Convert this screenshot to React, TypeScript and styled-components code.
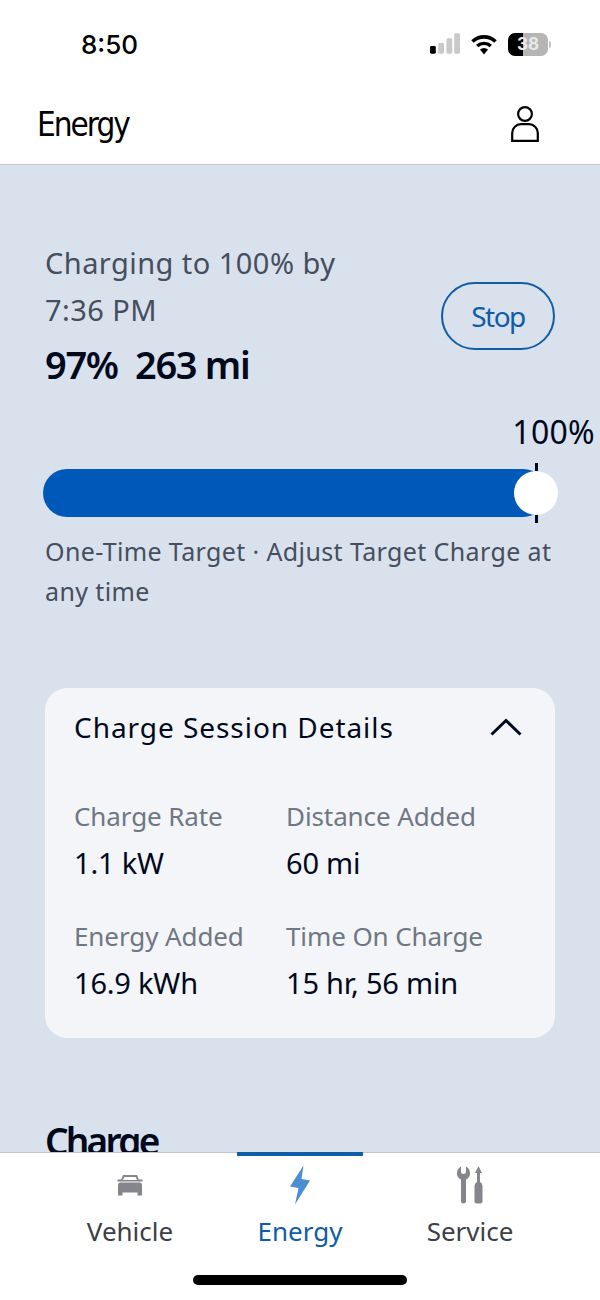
import { createGlobalStyle, styled } from "styled-components";

const GlobalStyle = createGlobalStyle`
  html, body {
    margin: 0;
    padding: 0;
    background: #ffffff;
  }
  body {
    font-family: "Noto Sans", "Open Sans", sans-serif;
  }
`;

const Page = styled.div`
  width: 600px;
  height: 1300px;
  display: flex;
  flex-direction: column;
  overflow: hidden;
  background: #ffffff;
`;

const StatusBar = styled.div`
  height: 88px;
  flex-shrink: 0;
  display: flex;
  justify-content: space-between;
  align-items: flex-start;
  padding: 25px 52px 0 81px;
  box-sizing: border-box;
`;

const Clock = styled.span`
  font-family: "Inter", sans-serif;
  font-size: 26px;
  line-height: 40px;
  font-weight: 500;
  color: #000000;
`;

const StatusIcons = styled.div`
  display: flex;
  align-items: center;
  gap: 11px;
  height: 40px;
  margin-top: -1px;
`;

const Battery = styled.div`
  position: relative;
  width: 40px;
  height: 23px;
  border-radius: 7px;
  background: linear-gradient(to right, #000000 38%, #b5b5b5 38%);
  color: #e9e9e9;
  font-family: "Inter", sans-serif;
  font-size: 17px;
  font-weight: 700;
  line-height: 23px;
  text-align: center;

  &::after {
    content: "";
    position: absolute;
    right: -3px;
    top: 8px;
    width: 2px;
    height: 7px;
    border-radius: 0 2px 2px 0;
    background: #c4c4c4;
  }
`;

const TopBar = styled.header`
  height: 77px;
  flex-shrink: 0;
  display: flex;
  justify-content: space-between;
  align-items: center;
  padding: 0 61px 4px 37px;
  box-sizing: border-box;
  border-bottom: 1px solid #c4c7cb;
`;

const TopTitle = styled.h1`
  margin: 0;
  font-family: "DejaVu Sans Condensed", "Noto Sans", sans-serif;
  font-size: 33px;
  font-weight: 400;
  letter-spacing: -2px;
  color: #000000;
`;

const Main = styled.main`
  flex: 1;
  min-height: 0;
  overflow: hidden;
  background: #d9e1ec;
  padding: 74px 45px 0;
  box-sizing: border-box;
`;

const StatusRow = styled.section`
  display: flex;
  justify-content: space-between;
  align-items: center;
`;

const StatusText = styled.div`
  display: flex;
  flex-direction: column;
`;

const ChargeLine = styled.div`
  font-size: 29px;
  line-height: 47px;
  color: #454e5e;
  letter-spacing: 0.45px;
`;

const RangeLine = styled.div`
  margin-top: 6px;
  font-size: 38px;
  line-height: 50px;
  font-weight: 600;
  color: #00091c;
  letter-spacing: -1.3px;
  white-space: pre;
`;

const StopButton = styled.button`
  width: 114px;
  height: 68px;
  margin-top: 3px;
  border: 2px solid #0f5da6;
  border-radius: 34px;
  background: transparent;
  color: #0f5da6;
  font-family: "Noto Sans", sans-serif;
  font-size: 28px;
  letter-spacing: -1.5px;
  padding: 0;
`;

const TargetLabel = styled.div`
  margin: 21px -40px 0 0;
  text-align: right;
  font-size: 32px;
  line-height: 44px;
  color: #00091c;
  letter-spacing: 0.3px;
`;

const Track = styled.div`
  position: relative;
  margin: 15px 0 0 -2px;
  width: 504px;
  height: 48px;
  border-radius: 24px;
  background: #0059b8;
`;

const Tick = styled.span`
  position: absolute;
  right: 9px;
  top: -6px;
  width: 3px;
  height: 60px;
  background: #000a1e;
`;

const Thumb = styled.span`
  position: absolute;
  right: -11px;
  top: 2px;
  width: 44px;
  height: 44px;
  border-radius: 50%;
  background: #ffffff;
`;

const Hint = styled.p`
  margin: 14px 0 0;
  font-size: 25px;
  line-height: 40px;
  color: #454e5e;
  letter-spacing: 0.38px;
`;

const Card = styled.section`
  margin-top: 77px;
  height: 350px;
  box-sizing: border-box;
  padding: 18px 33px 0 30px;
  background: #f3f5f9;
  border-radius: 22px;
`;

const CardHeader = styled.div`
  display: flex;
  justify-content: space-between;
  align-items: center;
  font-size: 28px;
  line-height: 42px;
  color: #00091c;
  letter-spacing: 0.95px;
  margin-left: -1px;
`;

const DetailGrid = styled.dl`
  margin: 46px 0 0 -1px;
  display: grid;
  grid-template-columns: 212px 1fr;
  row-gap: 26px;
`;

const Detail = styled.div`
  display: flex;
  flex-direction: column;
`;

const DetailLabel = styled.dt`
  font-size: 26px;
  line-height: 44px;
  color: #6f7783;
  letter-spacing: -0.1px;
`;

const DetailValue = styled.dd`
  margin: 0;
  font-size: 29px;
  line-height: 50px;
  color: #00091c;
  letter-spacing: -0.2px;
`;

const SectionTitle = styled.h2`
  margin: 78px 0 0;
  font-size: 37px;
  line-height: 50px;
  font-weight: 600;
  color: #00091c;
  letter-spacing: -2.8px;
`;

const TabBar = styled.nav`
  position: relative;
  height: 148px;
  flex-shrink: 0;
  display: grid;
  grid-template-columns: 260px 80px 260px;
  border-top: 1px solid #c4c7cb;
  box-sizing: border-box;
  background: #ffffff;
`;

const Tab = styled.div<{ $active?: boolean }>`
  display: flex;
  flex-direction: column;
  align-items: center;
  color: ${(p) => (p.$active ? "#0f5da6" : "#3c3f46")};
  font-size: 26px;
  line-height: 40px;
`;

const TabIcon = styled.div`
  height: 53px;
  margin-top: 5px;
  display: flex;
  align-items: center;
  justify-content: center;
`;

const ActiveMark = styled.span`
  position: absolute;
  left: 237px;
  top: -1px;
  width: 126px;
  height: 4px;
  background: #0f5da6;
`;

const HomeBar = styled.span`
  position: absolute;
  left: 193px;
  bottom: 15px;
  width: 214px;
  height: 10px;
  border-radius: 5px;
  background: #000000;
`;

const details = [
  { label: "Charge Rate", value: "1.1 kW" },
  { label: "Distance Added", value: "60 mi" },
  { label: "Energy Added", value: "16.9 kWh" },
  { label: "Time On Charge", value: "15 hr, 56 min" },
];

export default function App() {
  return (
    <Page>
      <GlobalStyle />
      <StatusBar>
        <Clock>8:50</Clock>
        <StatusIcons>
          <svg width="30" height="22" viewBox="0 0 31 22">
            <rect x="0" y="13" width="6" height="8" rx="1.5" fill="#000" />
            <rect x="8.5" y="10" width="6" height="11" rx="1.5" fill="#c9c9c9" />
            <rect x="17" y="5" width="6" height="16" rx="1.5" fill="#c9c9c9" />
            <rect x="25" y="0" width="6" height="21" rx="1.5" fill="#c9c9c9" />
          </svg>
          <svg width="26" height="21" viewBox="0 0 26 21">
            <path d="M1.5 7.5 A16.5 16.5 0 0 1 24.5 7.5" fill="none" stroke="#000" strokeWidth="3.6" />
            <path d="M6.2 12 A10 10 0 0 1 19.8 12" fill="none" stroke="#000" strokeWidth="3.4" />
            <path d="M9 15.6 A6 6 0 0 1 17 15.6 L13 20.5 Z" fill="#000" />
          </svg>
          <Battery>38</Battery>
        </StatusIcons>
      </StatusBar>
      <TopBar>
        <TopTitle>Energy</TopTitle>
        <svg width="28" height="36" viewBox="0 0 28 36" fill="none" stroke="#000" strokeWidth="2.2">
          <circle cx="14" cy="8" r="6.9" />
          <path d="M1.2 34.8 V27 A9 9 0 0 1 10 18.2 H18 A9 9 0 0 1 26.8 27 V34.8 Z" />
        </svg>
      </TopBar>
      <Main>
        <StatusRow>
          <StatusText>
            <ChargeLine>Charging to 100% by</ChargeLine>
            <ChargeLine>7:36 PM</ChargeLine>
            <RangeLine>97%  263 mi</RangeLine>
          </StatusText>
          <StopButton>Stop</StopButton>
        </StatusRow>
        <TargetLabel>100%</TargetLabel>
        <Track>
          <Tick />
          <Thumb />
        </Track>
        <Hint>One-Time Target · Adjust Target Charge at any time</Hint>
        <Card>
          <CardHeader>
            Charge Session Details
            <svg width="32" height="18" viewBox="0 0 32 18" fill="none" stroke="#000a1e" strokeWidth="3">
              <path d="M1.5 16.5 L16 2.5 L30.5 16.5" />
            </svg>
          </CardHeader>
          <DetailGrid>
            {details.map((d) => (
              <Detail key={d.label}>
                <DetailLabel>{d.label}</DetailLabel>
                <DetailValue>{d.value}</DetailValue>
              </Detail>
            ))}
          </DetailGrid>
        </Card>
        <SectionTitle>Charge</SectionTitle>
      </Main>
      <TabBar>
        <ActiveMark />
        <Tab>
          <TabIcon>
            <svg width="26" height="22" viewBox="0 0 26 22" fill="#85868c">
              <path d="M6 1 H20 L22.6 7.5 H3.4 Z M7.4 3 L5.9 6 H20.1 L18.6 3 Z" fillRule="evenodd" />
              <path d="M0.5 5.5 H4.5 V7.5 H0.5 Z M21.5 5.5 H25.5 V7.5 H21.5 Z" />
              <path d="M3 8.5 H23 Q25 8.5 25 11 V21.5 H20.5 V18.5 H5.5 V21.5 H1 V11 Q1 8.5 3 8.5 Z" />
            </svg>
          </TabIcon>
          Vehicle
        </Tab>
        <Tab $active>
          <TabIcon>
            <svg width="22" height="40" viewBox="0 0 22 40" fill="#4c8ed2">
              <path d="M14.5 0.5 L1 21.5 L9.5 23 L6 39.5 L21 15.5 L12.5 14 Z" />
            </svg>
          </TabIcon>
          Energy
        </Tab>
        <Tab>
          <TabIcon>
            <svg width="27" height="38" viewBox="0 0 27 38" fill="#85868c">
              <path d="M4 0.5 V6 Q4 8 6.5 8 Q9 8 9 6 V0.5 Q13 2.5 13 7.5 Q13 11.5 9 13.5 V35.5 Q9 37.5 6.5 37.5 Q4 37.5 4 35.5 V13.5 Q0 11.5 0 7.5 Q0 2.5 4 0.5 Z" />
              <path d="M21.5 0 L25 7 H23 V16 Q25.5 17 25.5 20 V35.5 Q25.5 37.5 21.5 37.5 Q17.5 37.5 17.5 35.5 V20 Q17.5 17 20 16 V7 H18 Z" />
            </svg>
          </TabIcon>
          Service
        </Tab>
        <HomeBar />
      </TabBar>
    </Page>
  );
}
